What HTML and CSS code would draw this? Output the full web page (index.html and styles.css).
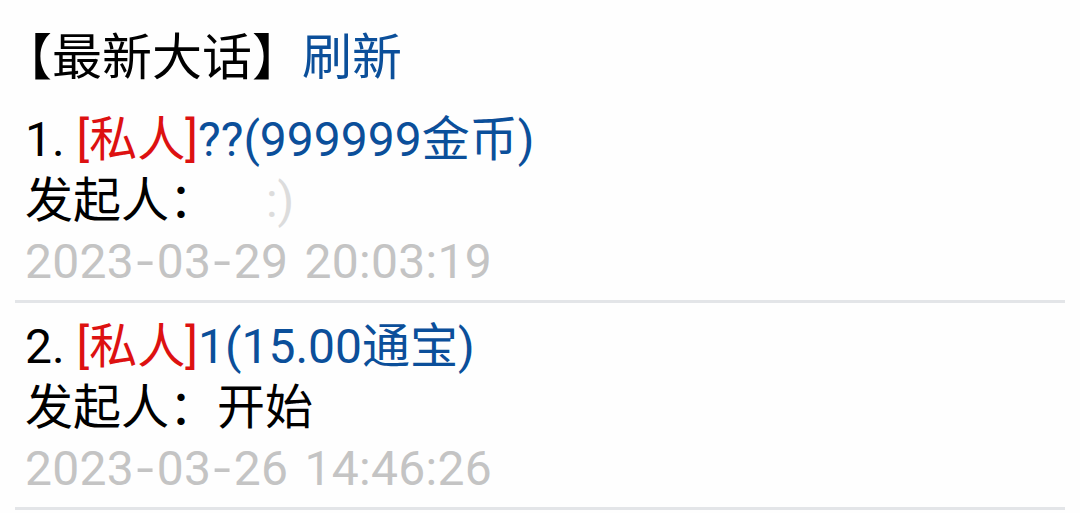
FILE: index.html
```html
<!DOCTYPE html>
<html lang="zh-CN">
<head>
<meta charset="utf-8">
<title>最新大话</title>
<link rel="stylesheet" href="styles.css">
</head>
<body>
<div class="page">
  <div class="title">【最新大话】<a class="link" href="#">刷新</a></div>
  <div class="item">
    <div class="line">1. <span class="tag">[私人]</span><a class="link" href="#">??(999999金币)</a></div>
    <div class="line">发起人：<span class="ghost">&emsp;:)</span></div>
    <div class="line time">2023<span class="dash">-</span>03<span class="dash">-</span>29 20:03:19</div>
  </div>
  <div class="item">
    <div class="line">2. <span class="tag">[私人]</span><a class="link" href="#">1(15.00通宝)</a></div>
    <div class="line">发起人：开始</div>
    <div class="line time">2023<span class="dash">-</span>03<span class="dash">-</span>26 14:46:26</div>
  </div>
</div>
</body>
</html>
```
FILE: styles.css
```css
html, body {
  margin: 0;
  padding: 0;
  background: #fefefe;
}
.page {
  padding: 23px 15px 0;
  font-family: Roboto, "Noto Sans CJK SC", sans-serif;
  color: #000;
}
.title {
  font-size: 50px;
  line-height: 70px;
  text-indent: -13px;
  margin-bottom: 3px;
  white-space: nowrap;
}
.link {
  color: #0b4f9a;
  text-decoration: none;
}
.item {
  padding: 13px 0 8px 10px;
  border-bottom: 3px solid #e3e5e8;
}
.line {
  font-size: 48px;
  line-height: 61px;
  white-space: nowrap;
}
.tag {
  color: #dd1111;
}
.ghost {
  color: #dcdcdc;
}
.time {
  color: #c4c4c4;
  letter-spacing: 0.3px;
  word-spacing: 4px;
}
.dash {
  display: inline-block;
  width: 0.47em;
  text-align: center;
  transform: scaleX(1.3);
}
```
